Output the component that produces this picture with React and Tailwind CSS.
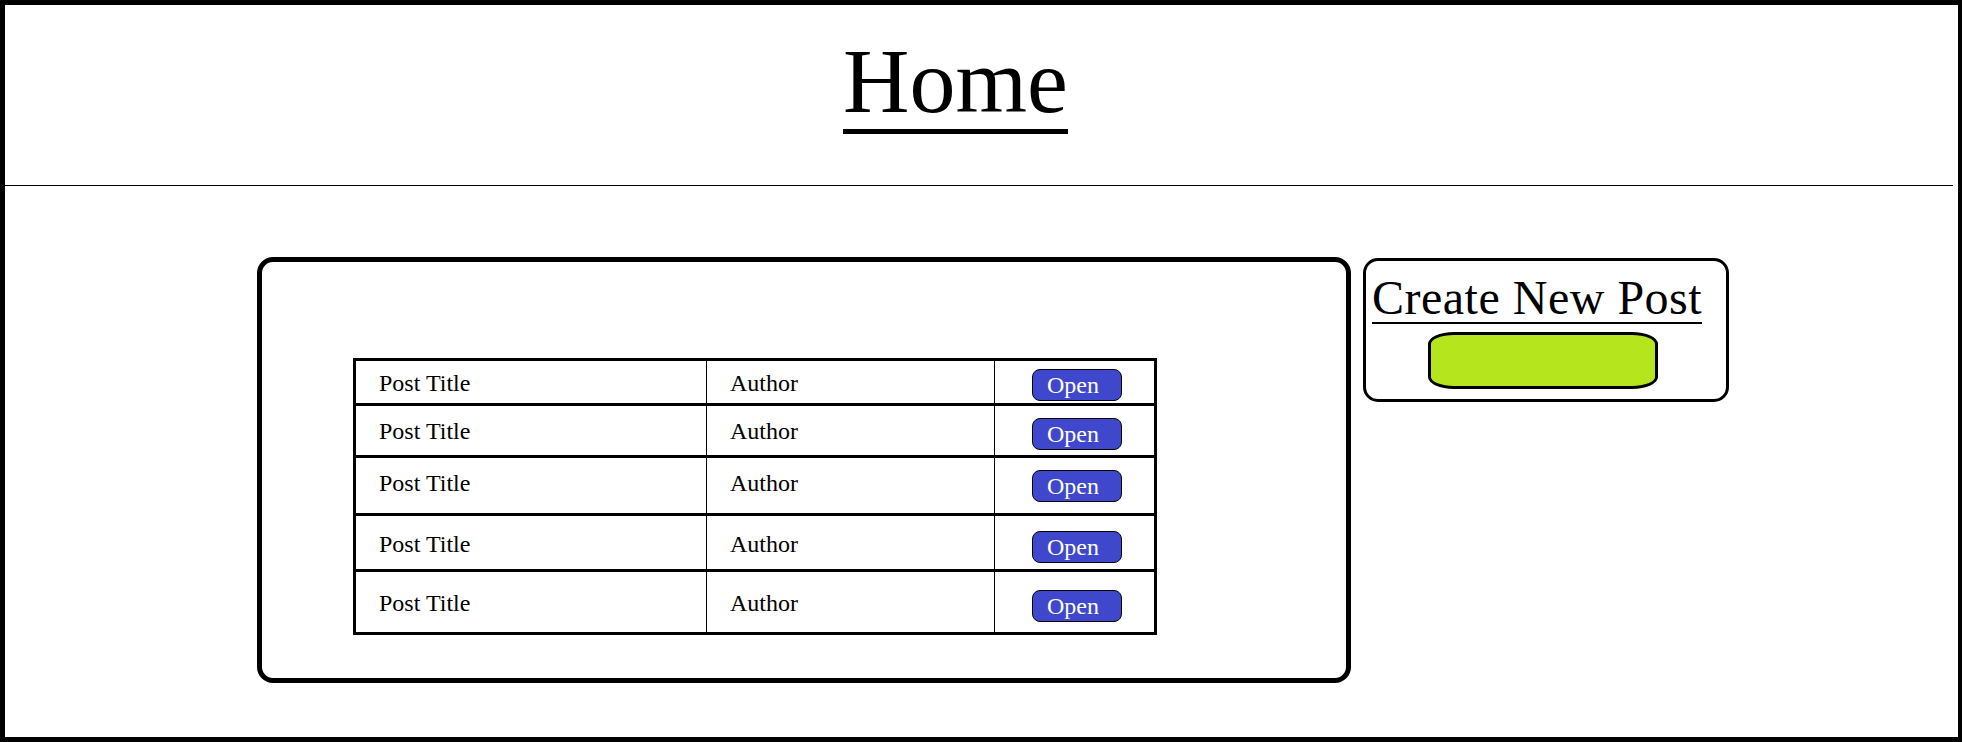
import React from "react";

const rows = [
  { h: "h-[42px]", tp: "pt-[10px]", bt: "pt-[8px]" },
  { h: "h-[49px]", tp: "pt-[13px]", bt: "pt-[12px]" },
  { h: "h-[55px]", tp: "pt-[13px]", bt: "pt-[12px]" },
  { h: "h-[53px]", tp: "pt-[16px]", bt: "pt-[15px]" },
  { h: "h-[60px]", tp: "pt-[19px]", bt: "pt-[18px]" },
];

export default function App() {
  return (
    <div className="w-[1962px] h-[742px] border-[5px] border-r-4 border-black bg-white text-black font-['Liberation_Serif',serif] overflow-hidden">
      <header className="h-[180px] pt-[30px]">
        <h1 className="ml-[838px] inline-block text-[92px] leading-none pb-[2px] border-b-[5px] border-black font-normal">
          Home
        </h1>
      </header>
      <div className="h-px w-[1948px] bg-black" />
      <div className="flex items-start pl-[252px] pt-[71px] gap-[12px]">
        <div className="w-[1094px] h-[426px] border-[5px] border-black rounded-[16px] pl-[91px] pt-[96px]">
          <div className="w-[804px] border-[3px] border-black">
            {rows.map((r, i) => (
              <div
                key={i}
                className={`flex ${r.h} ${i > 0 ? "border-t-[3px] border-black" : ""} box-content`}
              >
                <div className={`w-[350px] pl-[23px] ${r.tp} text-[24px] leading-none`}>
                  Post Title
                </div>
                <div className={`w-[288px] border-l border-black pl-[23px] ${r.tp} text-[24px] leading-none`}>
                  Author
                </div>
                <div className={`flex-1 border-l border-black pl-[37px] ${r.bt}`}>
                  <div className="w-[90px] h-[32px] border border-black rounded-[8px] bg-[#3F48CC] text-white text-[24px] leading-none pt-[3px] pl-[14px]">
                    Open
                  </div>
                </div>
              </div>
            ))}
          </div>
        </div>
        <div className="mt-[1px] w-[366px] h-[144px] border-[3px] border-black rounded-[15px] pl-[6px] pt-[13px]">
          <h2 className="inline-block text-[48px] leading-none tracking-[0.5px] border-b-2 border-black font-normal">
            Create New Post
          </h2>
          <div className="ml-[56px] mt-[8px] w-[230px] h-[57px] border-[3px] border-black rounded-[26px/12px] bg-[#B5E61D]" />
        </div>
      </div>
    </div>
  );
}
